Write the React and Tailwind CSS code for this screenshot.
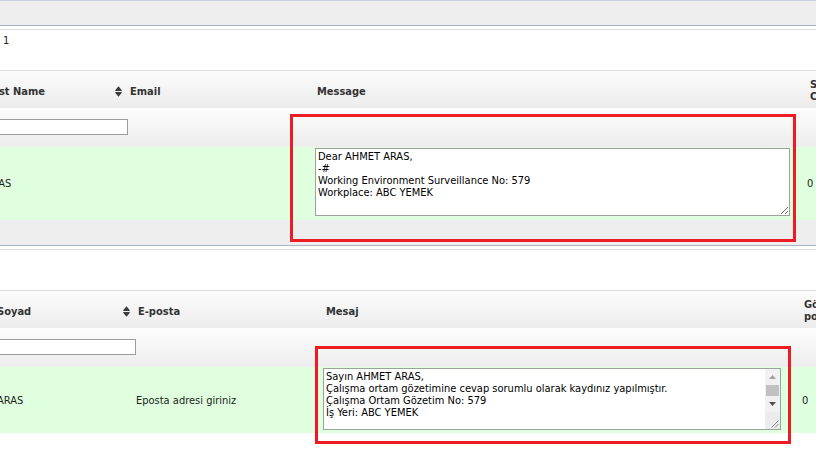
import React from "react";

const SortIcon = () => (
  <svg width="7" height="11" viewBox="0 0 7 11" className="shrink-0">
    <path d="M3.5 0.3 L6.8 4.2 Q7.1 4.9 6.2 4.9 H0.8 Q-0.1 4.9 0.2 4.2 Z" fill="#3b3b3b" />
    <path d="M3.5 10.7 L6.8 6.8 Q7.1 6.1 6.2 6.1 H0.8 Q-0.1 6.1 0.2 6.8 Z" fill="#3b3b3b" />
  </svg>
);

const Grip = () => (
  <svg width="9" height="9" viewBox="0 0 9 9">
    <path d="M8.5 1.5 L1.5 8.5 M8.5 5 L5 8.5" stroke="#8a8a8a" strokeWidth="1" />
  </svg>
);

const msg1 = "Dear AHMET ARAS,\n-#\nWorking Environment Surveillance No: 579\nWorkplace: ABC YEMEK";
const msg2 =
  "Sayın AHMET ARAS,\nÇalışma ortam gözetimine cevap sorumlu olarak kaydınız yapılmıştır.\nÇalışma Ortam Gözetim No: 579\nİş Yeri: ABC YEMEK\n\n\n";

export default function App() {
  return (
    <div className="relative w-[816px] h-[449px] overflow-hidden bg-white text-[11px] leading-[13px] text-[#222] font-['DejaVu_Sans_Condensed','DejaVu_Sans',sans-serif]">
      {/* top band */}
      <div className="h-px bg-[#c8d0e0]" />
      <div className="h-[24px] bg-[#eeeeee]" />
      <div className="h-px bg-[#a8b3c6]" />
      <div className="h-[3px]" />
      <div className="h-px bg-[#dcdcdc]" />
      <div className="h-[40px] pl-[3px] pt-[4px]">1</div>
      <div className="h-px bg-[#dcdcdc]" />

      {/* section 1 header */}
      <div className="flex h-[37px] bg-linear-to-b from-[#fcfcfc] to-[#ececec] font-bold text-[#333] whitespace-nowrap">
        <div className="w-[113px] shrink-0 flex items-center pt-[3px]">
          <span className="-ml-[14px]">Last Name</span>
        </div>
        <div className="w-[200px] shrink-0 flex items-center gap-[8px] pl-[2px] pt-[3px]">
          <SortIcon />
          <span>Email</span>
        </div>
        <div className="w-[487px] shrink-0 flex items-center pl-[4px] pt-[3px]">Message</div>
        <div className="flex flex-col justify-center pl-[10px] pt-[3px] leading-[12px]">
          <span>Sent</span>
          <span>Count</span>
        </div>
      </div>

      {/* section 1 filter */}
      <div className="flex h-[39px] bg-linear-to-b from-[#fdfdfd] to-[#ededed]">
        <div className="w-[113px] shrink-0">
          <div className="-ml-[30px] mt-[11px] w-[158px] h-[16px] border border-[#9c9c9c] bg-white" />
        </div>
      </div>

      {/* section 1 data */}
      <div className="flex h-[73px] bg-[#dfffdf] whitespace-nowrap">
        <div className="w-[113px] shrink-0 flex items-center">
          <span className="-ml-[15px]">ARAS</span>
        </div>
        <div className="w-[200px] shrink-0" />
        <div className="w-[487px] shrink-0 pl-[2px] pt-[1px]">
          <textarea
            readOnly
            defaultValue={msg1}
            className="block w-[475px] h-[68px] border border-[#9aa39a] bg-white px-[2px] py-[2px] leading-[12px] text-black text-[11px] outline-none"
          />
        </div>
        <div className="flex items-center pl-[7px]">0</div>
      </div>

      {/* section 1 footer */}
      <div className="h-[25px] bg-[#eeeeee]" />
      <div className="h-px bg-[#a8b3c6]" />
      <div className="h-[3px]" />
      <div className="h-px bg-[#dcdcdc]" />
      <div className="h-[40px]" />
      <div className="h-px bg-[#dcdcdc]" />

      {/* section 2 header */}
      <div className="flex h-[37px] bg-linear-to-b from-[#fcfcfc] to-[#ececec] font-bold text-[#333] whitespace-nowrap">
        <div className="w-[121px] shrink-0 flex items-center pt-[3px]">
          <span className="-ml-[3px]">Soyad</span>
        </div>
        <div className="w-[200px] shrink-0 flex items-center gap-[8px] pl-[2px] pt-[3px]">
          <SortIcon />
          <span>E-posta</span>
        </div>
        <div className="w-[476px] shrink-0 flex items-center pl-[5px] pt-[3px]">Mesaj</div>
        <div className="flex flex-col justify-center pl-[7px] pt-[3px] leading-[12px]">
          <span>Gönderim</span>
          <span>pozisyonu</span>
        </div>
      </div>

      {/* section 2 filter */}
      <div className="flex h-[39px] bg-linear-to-b from-[#fdfdfd] to-[#ededed]">
        <div className="w-[121px] shrink-0">
          <div className="-ml-[30px] mt-[11px] w-[166px] h-[16px] border border-[#9c9c9c] bg-white" />
        </div>
      </div>

      {/* section 2 data */}
      <div className="flex h-[66px] bg-[#dfffdf] whitespace-nowrap">
        <div className="w-[121px] shrink-0 flex items-center">
          <span className="-ml-[3px]">ARAS</span>
        </div>
        <div className="w-[200px] shrink-0 flex items-center pl-[15px]">Eposta adresi giriniz</div>
        <div className="w-[476px] shrink-0 pl-[2px] pt-[1px]">
          <div className="flex w-[458px] h-[62px] border border-[#9aa39a] bg-white">
            <textarea
              readOnly
              defaultValue={msg2}
              className="block flex-1 h-full resize-none overflow-hidden bg-white px-[2px] py-[2px] leading-[12px] text-black text-[11px] outline-none"
            />
            <div className="flex w-[15px] shrink-0 flex-col bg-[#f1f1f1]">
              <div className="flex h-[16px] items-center justify-center">
                <svg width="7" height="4" viewBox="0 0 7 4">
                  <path d="M3.5 0 L7 4 H0 Z" fill="#a3a3a3" />
                </svg>
              </div>
              <div className="mx-[1px] h-[11px] bg-[#c1c1c1]" />
              <div className="flex h-[16px] items-center justify-center">
                <svg width="7" height="4" viewBox="0 0 7 4">
                  <path d="M0 0 H7 L3.5 4 Z" fill="#505050" />
                </svg>
              </div>
              <div className="flex flex-1 items-end justify-end bg-[#ececec] pb-[1px] pr-[1px]">
                <Grip />
              </div>
            </div>
          </div>
        </div>
        <div className="flex items-center pl-[5px]">0</div>
      </div>

      {/* red annotation boxes */}
      <div className="absolute left-[290px] top-[114px] w-[506px] h-[128px] border-[3px] border-[#ed1c24] pointer-events-none" />
      <div className="absolute left-[315px] top-[346px] w-[476px] h-[98px] border-[3px] border-[#ed1c24] pointer-events-none" />
    </div>
  );
}
